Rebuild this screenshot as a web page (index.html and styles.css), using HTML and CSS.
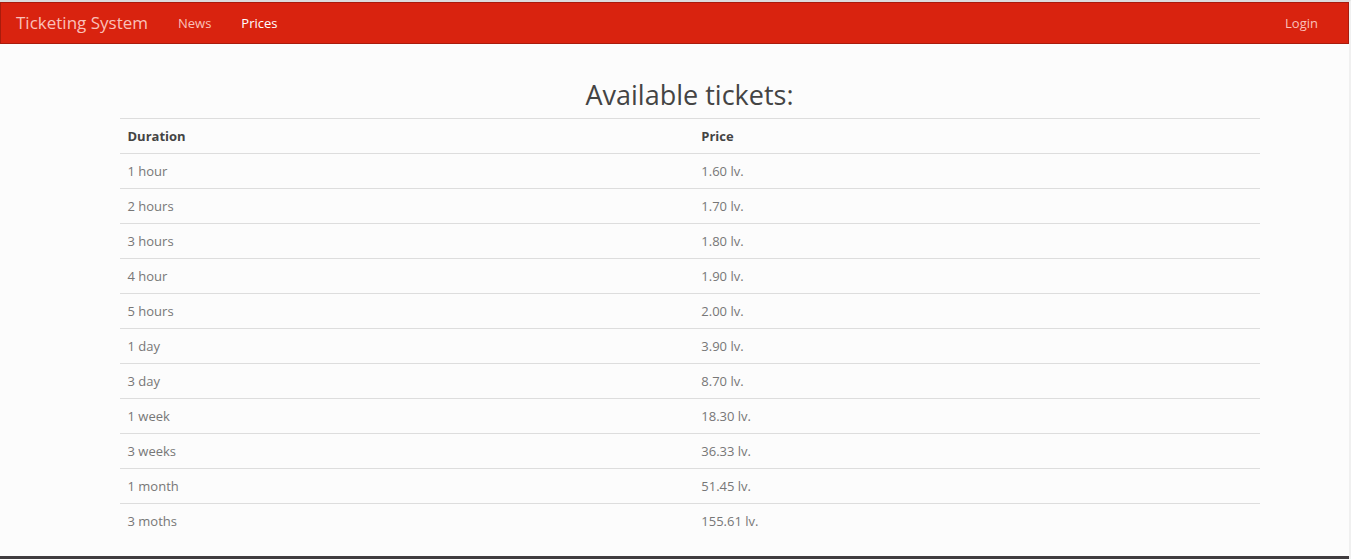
FILE: index.html
```html
<!DOCTYPE html>
<html lang="en">
<head>
<meta charset="utf-8">
<title>Ticketing System</title>
<link rel="stylesheet" href="styles.css">
</head>
<body>
<nav class="navbar">
  <a class="brand" href="#">Ticketing System</a>
  <a class="nav-link" href="#">News</a>
  <a class="nav-link active" href="#">Prices</a>
  <a class="nav-link login" href="#">Login</a>
</nav>
<main class="container">
  <h2 class="title">Available tickets:</h2>
  <table class="table">
    <thead><tr><th>Duration</th><th>Price</th></tr></thead>
    <tbody>
      <tr><td>1 hour</td><td>1.60 lv.</td></tr>
      <tr><td>2 hours</td><td>1.70 lv.</td></tr>
      <tr><td>3 hours</td><td>1.80 lv.</td></tr>
      <tr><td>4 hour</td><td>1.90 lv.</td></tr>
      <tr><td>5 hours</td><td>2.00 lv.</td></tr>
      <tr><td>1 day</td><td>3.90 lv.</td></tr>
      <tr><td>3 day</td><td>8.70 lv.</td></tr>
      <tr><td>1 week</td><td>18.30 lv.</td></tr>
      <tr><td>3 weeks</td><td>36.33 lv.</td></tr>
      <tr><td>1 month</td><td>51.45 lv.</td></tr>
      <tr><td>3 moths</td><td>155.61 lv.</td></tr>
    </tbody>
  </table>
</main>
<footer class="footer"></footer>
</body>
</html>
```
FILE: styles.css
```css
* { box-sizing: border-box; }
body {
  margin: 0;
  background: #fcfcfc;
  color: #777;
  font: 13px/18px "Open Sans", sans-serif;
  border-top: 2px solid #dcdcdc;
  border-right: 2px solid #f0f0f0;
}
.navbar {
  display: flex;
  align-items: center;
  height: 42px;
  padding: 0 15px 0 0;
  background: #d9230f;
  border: 1px solid #a91b0c;
}
.brand, .nav-link {
  padding: 0 15px;
  color: #fac0ba;
  text-decoration: none;
}
.brand { font-size: 17px; }
.active { color: #fff; }
.login { margin-left: auto; }
.container {
  max-width: 1200px;
  margin: 0 auto;
  padding: 34px 15px 0 45px;
}
.title {
  margin: 0 0 6px;
  color: #444;
  font-size: 27px;
  font-weight: 400;
  line-height: 34px;
  text-align: center;
}
.table {
  width: 100%;
  border-collapse: collapse;
}
.table th, .table td {
  padding: 8px;
  border-top: 1px solid #ddd;
  text-align: left;
}
.table th { color: #444; }
.footer {
  height: 3px;
  margin-top: 18px;
  background: #403c3f;
}
```
